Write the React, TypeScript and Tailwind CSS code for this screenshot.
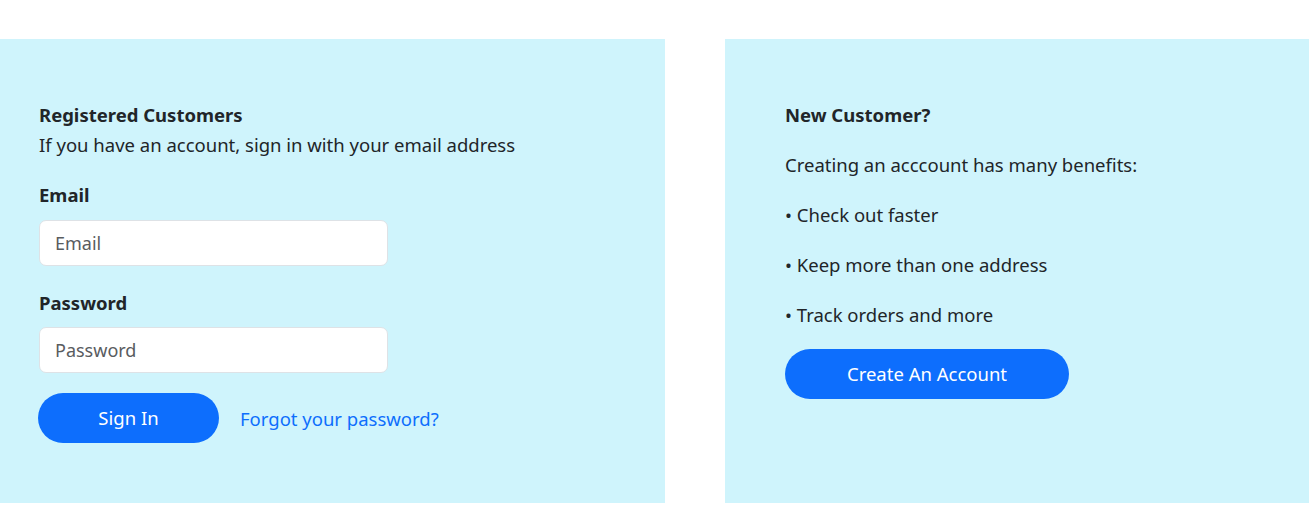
import React from 'react';

const App: React.FC = () => {
  return (
    <div className="bg-white min-h-screen pt-[39px] text-[18.5px] text-[#212529] font-['Noto_Sans',sans-serif]">
      <div className="flex gap-[60px]">
        {/* Login */}
        <div className="w-[665px] shrink-0 bg-[#cff4fc] pl-[38px] pt-[64px] h-[464px]">
          <h3 className="font-bold leading-[24px] pl-[1px]">Registered Customers</h3>
          <p className="leading-[24px] mt-[6px] pl-[1px]">If you have an account, sign in with your email address</p>
          <label className="block font-bold leading-[24px] mt-[26px] pl-[1px]">Email</label>
          <input
            type="email"
            placeholder="Email"
            className="block mt-[13px] ml-[1px] w-[349px] h-[46px] bg-white border border-[#dee2e6] rounded-[7px] px-[15px] text-[18px] placeholder:text-[#595c5f] outline-none"
          />
          <label className="block font-bold leading-[24px] mt-[25px] pl-[1px]">Password</label>
          <input
            type="password"
            placeholder="Password"
            className="block mt-[12px] ml-[1px] w-[349px] h-[46px] bg-white border border-[#dee2e6] rounded-[7px] px-[15px] text-[18px] placeholder:text-[#595c5f] outline-none"
          />
          <div className="flex items-center gap-[21px] mt-[20px]">
            <button className="w-[181px] h-[50px] rounded-full bg-[#0d6efd] text-white text-[18.5px]">Sign In</button>
            <a href="#" className="text-[#0d6efd] text-[18.5px] pt-[1px]">Forgot your password?</a>
          </div>
        </div>

        {/* New customer */}
        <div className="flex-1 bg-[#cff4fc] pl-[60px] pt-[64px] h-[464px]">
          <h3 className="font-bold leading-[24px]">New Customer?</h3>
          <p className="leading-[24px] mt-[26px]">Creating an acccount has many benefits:</p>
          <ul className="mt-[26px] flex flex-col gap-[26px]">
            <li className="leading-[24px]">• Check out faster</li>
            <li className="leading-[24px]">• Keep more than one address</li>
            <li className="leading-[24px]">• Track orders and more</li>
          </ul>
          <button className="mt-[22px] w-[284px] h-[50px] rounded-full bg-[#0d6efd] text-white text-[18.5px] leading-[50px]">Create An Account</button>
        </div>
      </div>
    </div>
  );
};

export default App;
